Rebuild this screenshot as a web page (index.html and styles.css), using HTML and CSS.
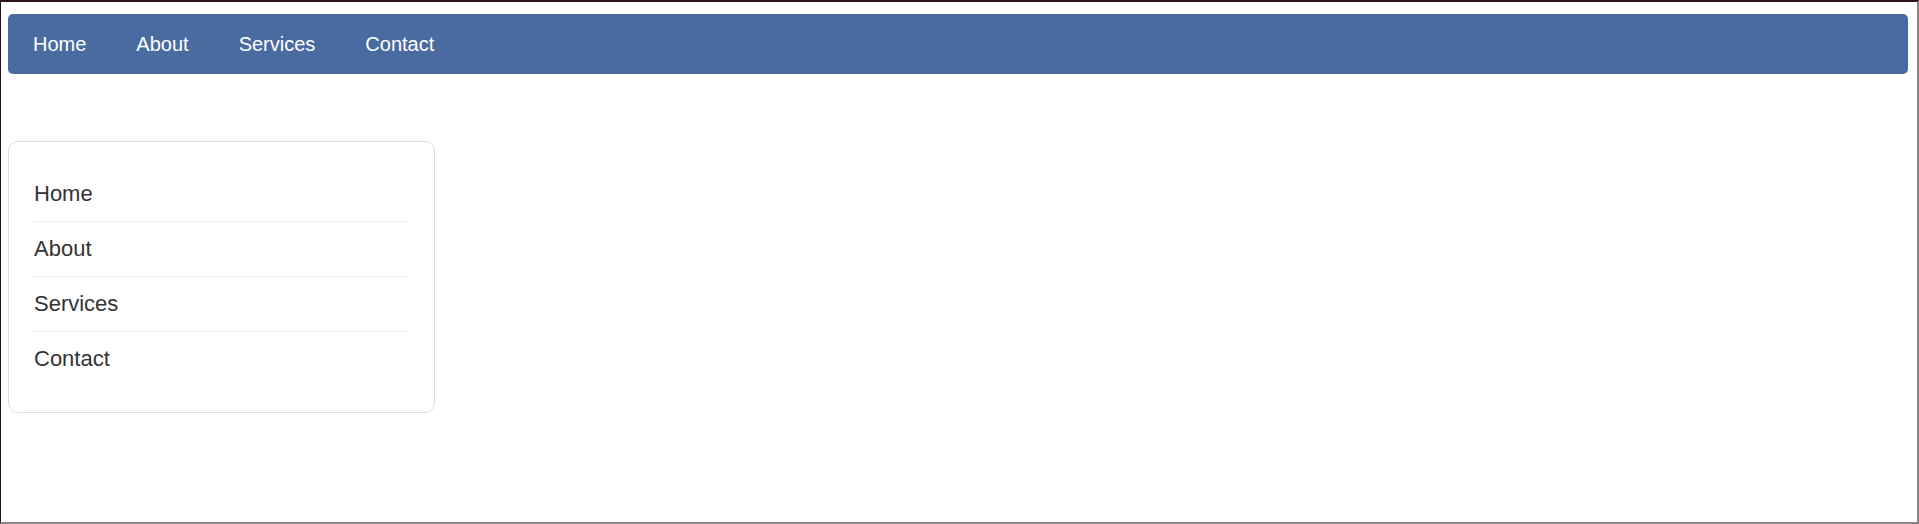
FILE: index.html
```html
<!DOCTYPE html>
<html lang="en">
<head>
<meta charset="utf-8">
<title>Navigation</title>
<link rel="stylesheet" href="styles.css">
</head>
<body>
<nav class="navbar">
  <a class="nav-link" href="#">Home</a>
  <a class="nav-link" href="#">About</a>
  <a class="nav-link" href="#">Services</a>
  <a class="nav-link" href="#">Contact</a>
</nav>
<aside class="side-card">
  <ul class="side-list">
    <li class="side-item"><a href="#">Home</a></li>
    <li class="side-item"><a href="#">About</a></li>
    <li class="side-item"><a href="#">Services</a></li>
    <li class="side-item"><a href="#">Contact</a></li>
  </ul>
</aside>
</body>
</html>
```
FILE: styles.css
```css
html {
  height: 100vh;
  box-sizing: border-box;
  border-top: 2px solid #2a1414;
  border-left: 1px solid #2a1414;
  border-right: 2px solid #8a8484;
  border-bottom: 2px solid #8a8484;
  overflow: hidden;
  background: #fff;
}
body {
  margin: 0;
  padding: 12px 9px 0 7px;
  font-family: "Liberation Sans", Arial, sans-serif;
}
.navbar {
  display: flex;
  align-items: center;
  height: 60px;
  background: #4a6b9f;
  border-radius: 5px;
  margin-bottom: 67px;
}
.nav-link {
  color: #fff;
  text-decoration: none;
  font-size: 20px;
  padding: 0 25px;
  line-height: 60px;
}
.side-card {
  width: 427px;
  box-sizing: border-box;
  border: 1px solid #ddd;
  border-radius: 10px;
  padding: 25px 25px 26px;
}
.side-list {
  list-style: none;
  margin: 0;
  padding: 0;
}
.side-item {
  padding: 11px 0;
  line-height: 32px;
  font-size: 22px;
  border-bottom: 1px solid #eee;
}
.side-item:last-child {
  border-bottom: none;
}
.side-item a {
  color: #333;
  text-decoration: none;
}
```
